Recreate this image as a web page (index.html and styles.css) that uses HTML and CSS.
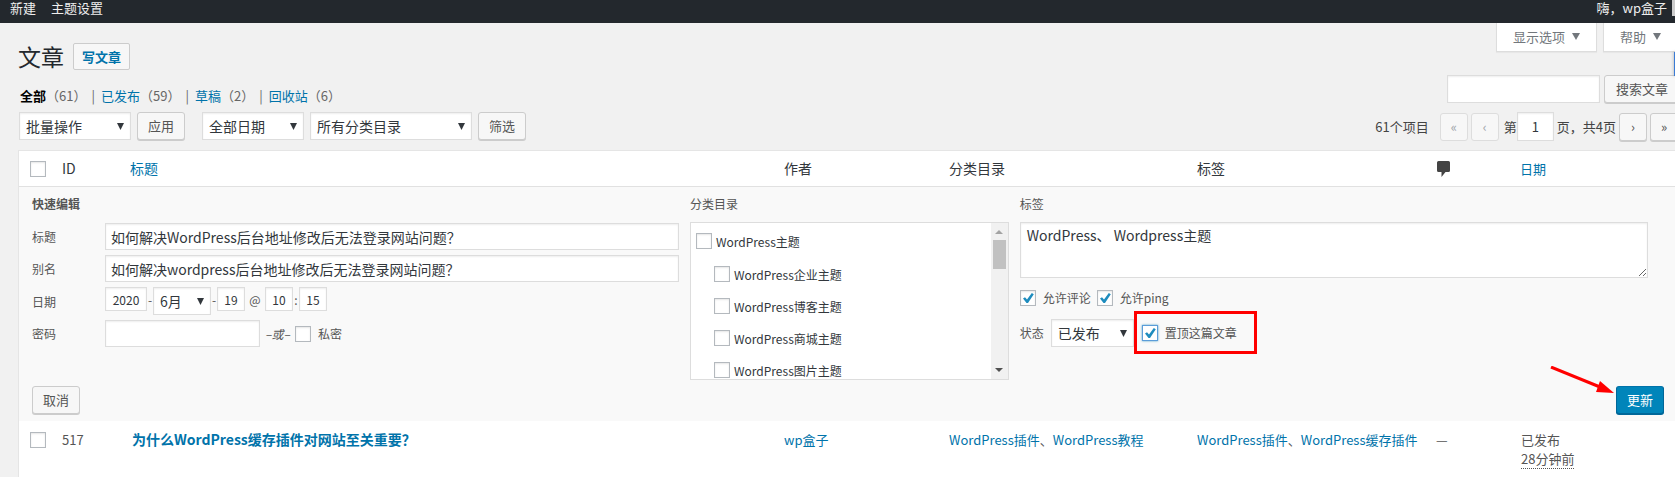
FILE: index.html
```html
<!DOCTYPE html>
<html lang="zh-CN">
<head>
  <meta charset="UTF-8">
  <title>文章</title>
  <link rel="stylesheet" href="styles.css">
</head>
<body>

  <div class="adminbar">
    <div class="adminbar-left">
      <a href="#">新建</a>
      <a href="#">主题设置</a>
    </div>
    <div class="adminbar-right">
      <a href="#">嗨，wp盒子</a>
      <span class="avatar"></span>
    </div>
  </div>

  <div class="side-tab"></div>

  <div class="wrap">
    <div class="top">
      <div class="heading">
        <h1>文章</h1>
        <a href="#" class="page-title-action">写文章</a>
      </div>
      <div class="screen-tabs">
        <button type="button">显示选项 <span class="caret"></span></button>
        <button type="button">帮助 <span class="caret"></span></button>
      </div>
    </div>

    <div class="filters">
      <ul class="subsubsub">
        <li><a href="#" class="current">全部</a>（61）</li>
        <li><a href="#">已发布</a>（59）</li>
        <li><a href="#">草稿</a>（2）</li>
        <li><a href="#">回收站</a>（6）</li>
      </ul>
      <div class="search-box">
        <input type="search" aria-label="搜索文章">
        <button type="button" class="button search-btn">搜索文章</button>
      </div>
    </div>

    <div class="tablenav">
      <div class="actions">
        <select class="bulk" aria-label="批量操作"><option>批量操作</option></select>
        <button type="button" class="button">应用</button>
        <select class="dates" aria-label="日期"><option>全部日期</option></select>
        <select class="cats" aria-label="分类目录"><option>所有分类目录</option></select>
        <button type="button" class="button">筛选</button>
      </div>
      <div class="pagination">
        <span class="total">61个项目</span>
        <button type="button" class="button page-btn" disabled>«</button>
        <button type="button" class="button page-btn" disabled>‹</button>
        <label for="paged">第</label>
        <input type="text" id="paged" value="1">
        <span class="pages">页，共4页</span>
        <button type="button" class="button page-btn">›</button>
        <button type="button" class="button page-btn">»</button>
      </div>
    </div>

    <table class="posts">
      <thead>
        <tr>
          <th class="col-cb"><input type="checkbox" aria-label="全选"></th>
          <th class="col-id">ID</th>
          <th><a href="#">标题</a></th>
          <th class="col-author">作者</th>
          <th class="col-terms">分类目录</th>
          <th class="col-terms">标签</th>
          <th class="col-comments">
            <svg class="comment-icon" width="14" height="16" viewBox="0 0 14 16"><path fill="#444" d="M2.500 0h10q1.500 0 1.500 1.500v8q0 1.500-1.500 1.500h-3l-4 5v-5h-3q-1.500 0-1.500-1.500v-8q0-1.500 1.500-1.500z"/></svg>
          </th>
          <th class="col-date"><a href="#">日期</a></th>
        </tr>
      </thead>
      <tbody>
        <tr class="inline-edit">
          <td colspan="8">
            <div class="edit-columns">
              <div class="edit-main">
                <h2>快速编辑</h2>
                <div class="field">
                  <label for="post-title">标题</label>
                  <input type="text" id="post-title" value="如何解决WordPress后台地址修改后无法登录网站问题？">
                </div>
                <div class="field">
                  <label for="post-name">别名</label>
                  <input type="text" id="post-name" value="如何解决wordpress后台地址修改后无法登录网站问题？">
                </div>
                <div class="field date-field">
                  <label for="year">日期</label>
                  <input type="text" id="year" class="year" value="2020">
                  <span class="sep">-</span>
                  <select class="month" aria-label="月"><option>6月</option></select>
                  <span class="sep">-</span>
                  <input type="text" class="num" aria-label="日" value="19">
                  <span class="sep at">@</span>
                  <input type="text" class="num" aria-label="时" value="10">
                  <span class="sep">:</span>
                  <input type="text" class="num" aria-label="分" value="15">
                </div>
                <div class="field">
                  <label for="post-password">密码</label>
                  <input type="text" id="post-password" class="password">
                  <em>–或–</em>
                  <label class="check"><input type="checkbox">私密</label>
                </div>
              </div>

              <div class="edit-cats">
                <span class="column-title">分类目录</span>
                <div class="cat-box">
                  <ul class="cat-list">
                    <li><label><input type="checkbox">WordPress主题</label>
                      <ul>
                        <li><label><input type="checkbox">WordPress企业主题</label></li>
                        <li><label><input type="checkbox">WordPress博客主题</label></li>
                        <li><label><input type="checkbox">WordPress商城主题</label></li>
                        <li><label><input type="checkbox">WordPress图片主题</label></li>
                      </ul>
                    </li>
                  </ul>
                  <div class="scrollbar">
                    <span class="arrow-up"></span>
                    <span class="thumb"></span>
                    <span class="arrow-down"></span>
                  </div>
                </div>
              </div>

              <div class="edit-tags">
                <label class="column-title" for="tags">标签</label>
                <textarea id="tags">WordPress、 Wordpress主题</textarea>
                <div class="options">
                  <label class="check"><input type="checkbox" checked>允许评论</label>
                  <label class="check"><input type="checkbox" checked>允许ping</label>
                </div>
                <div class="status">
                  <label for="status">状态</label>
                  <select id="status"><option>已发布</option></select>
                  <div class="sticky">
                    <label class="check"><input type="checkbox" class="focused" checked>置顶这篇文章</label>
                  </div>
                </div>
              </div>
            </div>

            <div class="submit">
              <button type="button" class="button">取消</button>
              <div class="save">
                <svg class="pointer" width="64" height="28" viewBox="0 0 64 28"><path d="M1 1L50 21" stroke="#f00" stroke-width="3"/><path fill="#f00" d="M50 15L64 27L46 26z"/></svg>
                <button type="button" class="button primary">更新</button>
              </div>
            </div>
          </td>
        </tr>
        <tr class="post">
          <td class="col-cb"><input type="checkbox" aria-label="选择文章"></td>
          <td>517</td>
          <td class="title"><a href="#">为什么WordPress缓存插件对网站至关重要？</a></td>
          <td><a href="#">wp盒子</a></td>
          <td><a href="#">WordPress插件</a>、<a href="#">WordPress教程</a></td>
          <td class="tags"><a href="#">WordPress插件</a>、<a href="#">WordPress缓存插件</a></td>
          <td class="col-comments">—</td>
          <td>已发布<br><abbr>28分钟前</abbr></td>
        </tr>
      </tbody>
    </table>
  </div>

</body>
</html>
```
FILE: styles.css
```css
* {
  box-sizing: border-box;
}

body {
  margin: 0;
  background: #f1f1f1;
  color: #444;
  font-family: 'Noto Sans CJK SC', 'Open Sans', sans-serif;
  font-size: 13px;
  line-height: 19px;
  min-height: 100vh;
  overflow: hidden;
}

h1, h2, ul {
  margin: 0;
  padding: 0;
  font-weight: 400;
}

ul {
  list-style: none;
}

a {
  color: #0073aa;
  text-decoration: none;
}

input, select, textarea, button {
  font-family: inherit;
  font-size: 14px;
  margin: 0;
}

input, select, textarea {
  border: 1px solid #ddd;
  border-radius: 0;
  background-color: #fff;
  color: #32373c;
  box-shadow: inset 0 1px 2px rgba(0, 0, 0, 0.07);
  outline: none;
}

select {
  appearance: none;
  height: 28px;
  padding: 0 16px 0 6px;
  background: #fff url("data:image/svg+xml,%3Csvg xmlns='http://www.w3.org/2000/svg' width='7' height='7'%3E%3Cpath fill='%2332373c' d='M0 0h7L3.500 7z'/%3E%3C/svg%3E") no-repeat right 6px top 10px;
}

input[type="checkbox"] {
  appearance: none;
  flex: none;
  width: 16px;
  height: 16px;
  border: 1px solid #b4b9be;
  box-shadow: inset 0 1px 2px rgba(0, 0, 0, 0.1);
}

input[type="checkbox"]:checked {
  background: #fff url("data:image/svg+xml,%3Csvg xmlns='http://www.w3.org/2000/svg' width='12' height='12'%3E%3Cpath fill='%231e8cbe' d='M1 6.500L3 5.200L5 7.600L9.800 1L11.800 2.200L6 11H4.500z'/%3E%3C/svg%3E") no-repeat center;
}

input[type="checkbox"].focused {
  border-color: #5b9dd9;
  box-shadow: 0 0 2px rgba(30, 140, 190, 0.8);
}

.button {
  height: 28px;
  padding: 0 10px;
  border: 1px solid #ccc;
  border-radius: 3px;
  background: #f7f7f7;
  color: #555;
  font-size: 13px;
  line-height: 24px;
  white-space: nowrap;
  box-shadow: 0 1px 0 #ccc;
  cursor: pointer;
}

.button:disabled {
  border-color: #ddd;
  color: #a0a5aa;
  box-shadow: none;
}

.button.primary {
  background: #0085ba;
  border-color: #0073aa #006799 #006799;
  box-shadow: 0 1px 0 #006799;
  color: #fff;
}

.adminbar {
  display: flex;
  justify-content: space-between;
  height: 23px;
  padding-left: 10px;
  background: #23282d;
  line-height: 15px;
}

.adminbar a {
  color: #eee;
}

.adminbar-left {
  display: flex;
  gap: 15px;
}

.adminbar-right {
  display: flex;
  gap: 5px;
}

.avatar {
  width: 3px;
  height: 16px;
  background: #ccc;
}

.side-tab {
  position: absolute;
  top: 52px;
  right: 0;
  width: 1px;
  height: 24px;
  background: #3a7bd5;
  box-shadow: 0 0 3px rgba(0, 0, 0, 0.5);
}

/* the content runs a little past the right edge */
.wrap {
  margin: 0 -5px 0 18px;
}

.top {
  display: flex;
  justify-content: space-between;
}

.heading {
  display: flex;
  align-items: center;
  gap: 9px;
  padding-top: 11px;
}

.heading h1 {
  font-size: 23px;
  line-height: 44px;
  color: #23282d;
}

.page-title-action {
  padding: 3px 8px;
  border: 1px solid #ccc;
  border-radius: 2px;
  background: #f7f7f7;
  font-weight: 600;
}

.screen-tabs {
  display: flex;
  align-items: flex-start;
  gap: 6px;
  padding-right: 2px;
}

.screen-tabs button {
  display: flex;
  align-items: center;
  gap: 7px;
  height: 29px;
  padding: 0 16px 2px;
  border: 1px solid #ddd;
  border-top: none;
  background: #fff;
  color: #72777c;
  font-size: 13px;
  box-shadow: 0 1px 1px rgba(0, 0, 0, 0.04);
}

.caret {
  border: 4px solid transparent;
  border-top: 7px solid #72777c;
  border-bottom: none;
}

.filters {
  display: flex;
  justify-content: space-between;
  align-items: flex-end;
  margin-top: -3px;
}

.subsubsub {
  display: flex;
  padding-left: 2px;
  line-height: 15px;
  color: #666;
}

.subsubsub li + li::before {
  content: "|";
  margin: 0 6px 0 5px;
}

.subsubsub .current {
  color: #000;
  font-weight: 600;
}

.search-box {
  display: flex;
  gap: 4px;
}

.search-box input {
  width: 153px;
  height: 28px;
}

.search-btn {
  width: 76px;
}

.tablenav {
  display: flex;
  justify-content: space-between;
  margin: 9px 0;
}

.actions {
  display: flex;
  gap: 6px;
  padding-left: 1px;
}

.bulk {
  width: 112px;
}

.dates {
  width: 102px;
  margin-left: 11px;
}

.cats {
  width: 162px;
}

.pagination {
  display: flex;
  align-items: center;
  gap: 3px;
  padding-right: 2px;
}

.total {
  margin-right: 8px;
}

.page-btn {
  width: 28px;
  padding: 0;
}

.pagination label {
  padding-left: 2px;
}

.pagination input {
  width: 37px;
  height: 29px;
  margin-left: -3px;
  padding: 0;
  font-size: 13px;
  text-align: center;
}

.posts {
  width: 100%;
  border: 1px solid #e5e5e5;
  border-spacing: 0;
  table-layout: fixed;
  background: #fff;
}

.posts th {
  padding: 8px 10px;
  border-bottom: 1px solid #e1e1e1;
  font-size: 14px;
  font-weight: 400;
  line-height: 19px;
  color: #32373c;
  text-align: left;
}

.posts .col-cb {
  width: 33px;
  padding-right: 0;
  padding-left: 11px;
}

.posts td.col-cb {
  padding-top: 11px;
}

.col-cb input, .comment-icon {
  display: block;
}

.col-id {
  width: 68px;
}

.col-author {
  width: 165px;
}

.col-terms {
  width: 248px;
}

.posts .col-comments {
  width: 76px;
  padding-left: 1px;
}

.posts .col-date {
  width: 168px;
  padding-left: 9px;
  font-size: 13px;
}

.post td {
  padding: 9px 10px;
  color: #555;
  vertical-align: top;
  white-space: nowrap;
}

.post .title {
  font-size: 14px;
  font-weight: 600;
  padding-left: 12px;
}

.post abbr {
  border-bottom: 1px dotted #555;
}

.inline-edit td {
  padding: 8px 15px 7px 13px;
  background: #f9f9f9;
  color: #555;
  font-size: 12px;
}

.edit-columns {
  display: grid;
  grid-template-columns: 69fr 34fr 67fr;
  gap: 11px;
  margin-right: 16px;
}

.inline-edit h2, .column-title {
  display: block;
  height: 27px;
  font-size: 12px;
  line-height: 18px;
}

.inline-edit h2 {
  height: 28px;
  font-weight: 600;
}

.edit-main {
  display: flex;
  flex-direction: column;
}

.field {
  display: flex;
  align-items: center;
  height: 27px;
  margin-bottom: 5px;
}

.field > label:first-child {
  width: 73px;
}

.field input[type="text"] {
  height: 27px;
  padding: 0 5px;
}

.field #post-title, .field #post-name {
  flex: 1;
}

.field .password {
  width: 155px;
}

.field em {
  margin: 0 5px;
}

.check {
  display: flex;
  align-items: center;
  gap: 7px;
}

.date-field {
  height: 28px;
}

.field.date-field input {
  height: 24px;
  align-self: flex-start;
  padding: 0;
  font-size: 12px;
  text-align: center;
}

.year {
  width: 42px;
}

.num {
  width: 28px;
}

.month {
  width: 58px;
}

.sep {
  width: 6px;
  padding-bottom: 3px;
  text-align: center;
}

.at {
  width: 20px;
}

.cat-box {
  display: flex;
  height: 158px;
  border: 1px solid #ddd;
  background: #fff;
  overflow: hidden;
}

.cat-list {
  flex: 1;
  padding: 2px 5px;
  color: #32373c;
}

.cat-list label {
  display: flex;
  align-items: center;
  gap: 4px;
  height: 32px;
}

.cat-list ul {
  margin: 1px 0 0 18px;
}

.scrollbar {
  display: flex;
  flex-direction: column;
  align-items: center;
  width: 17px;
  background: #f1f1f1;
}

.arrow-up, .arrow-down {
  border: 4px solid transparent;
}

.arrow-up {
  margin: 7px 0 6px;
  border-top: none;
  border-bottom-color: #a3a3a3;
}

.arrow-down {
  margin: auto 0 7px;
  border-bottom: none;
  border-top-color: #505050;
}

.thumb {
  width: 13px;
  height: 29px;
  background: #c1c1c1;
}

.edit-tags textarea {
  display: block;
  width: 100%;
  height: 56px;
  padding: 2px 6px;
  line-height: 20px;
}

.options {
  display: flex;
  gap: 6px;
  margin-top: 10px;
}

.status {
  display: flex;
  align-items: center;
  margin-top: 4px;
}

.status select {
  width: 83px;
  margin-left: 7px;
}

/* red frame around the sticky option */
.sticky {
  padding: 9px 17px 9px 5px;
  border: 3px solid #f00;
}

.submit {
  display: flex;
  justify-content: space-between;
  align-items: flex-end;
  margin-top: 6px;
}

.save {
  position: relative;
}

.pointer {
  position: absolute;
  right: 50px;
  top: -20px;
}
```
